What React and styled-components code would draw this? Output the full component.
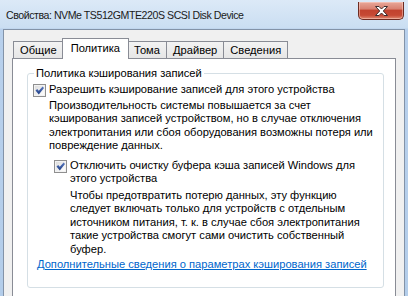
import React from "react";
import styled, { createGlobalStyle } from "styled-components";

const tabs = ["Общие", "Политика", "Тома", "Драйвер", "Сведения"];

const policyText = [
	"Производительность системы повышается за счет",
	"кэширования записей устройством, но в случае отключения",
	"электропитания или сбоя оборудования возможны потеря или",
	"повреждение данных.",
];

const flushText = [
	"Чтобы предотвратить потерю данных, эту функцию",
	"следует включать только для устройств с отдельным",
	"источником питания, т. к.  в случае сбоя электропитания",
	"такие устройства смогут сами очистить собственный",
	"буфер.",
];

function Lines({ lines }) {
	return lines.map((line, i) => (
		<React.Fragment key={i}>
			{line}
			{i < lines.length - 1 && <br />}
		</React.Fragment>
	));
}

function CheckBox({ checked }) {
	return (
		<Box>
			{checked && (
				<svg width="11" height="11" viewBox="0 0 11 11">
					<defs>
						<linearGradient id="chk" x1="0" y1="0" x2="0" y2="1">
							<stop offset="0" stopColor="#5a79c0" />
							<stop offset="1" stopColor="#1f3f86" />
						</linearGradient>
					</defs>
					<polygon
						points="1.5,5.6 3.2,4 4.8,5.8 8.6,1.4 10,2.9 4.8,9.4"
						fill="url(#chk)"
					/>
				</svg>
			)}
		</Box>
	);
}

export default function App() {
	return (
		<>
			<GlobalStyle />
			<Window>
				<TitleBar>
					<Title>Свойства: NVMe TS512GMTE220S SCSI Disk Device</Title>
					<CloseButton>
						<svg width="13" height="10" viewBox="0 0 13 10">
							<polygon
								points="0.5,0.5 4,0.5 6.5,3 9,0.5 12.5,0.5 8.3,5 12.5,9.5 9,9.5 6.5,7 4,9.5 0.5,9.5 4.7,5"
								fill="#fff"
								stroke="#3c2c2c"
								strokeWidth="1"
								strokeLinejoin="round"
							/>
						</svg>
					</CloseButton>
				</TitleBar>
				<Client>
					<TabStrip>
						{tabs.map((t, i) => (
							<Tab key={t} $active={i === 1} $first={i === 0}>
								{t}
							</Tab>
						))}
					</TabStrip>
					<TabPage>
						<GroupBox>
							<Legend>Политика кэширования записей</Legend>
							<CheckRow>
								<CheckBox checked />
								<Label>Разрешить кэширование записей для этого устройства</Label>
							</CheckRow>
							<Description $indent={16}>
								<Lines lines={policyText} />
							</Description>
							<CheckRow $indent={21} $gap={6}>
								<CheckBox checked />
								<Label>
									Отключить очистку буфера кэша записей Windows для
									<br />
									этого устройства
								</Label>
							</CheckRow>
							<Description $indent={37} $gap={3}>
								<Lines lines={flushText} />
							</Description>
							<Link href="#">Дополнительные сведения о параметрах кэширования записей</Link>
						</GroupBox>
					</TabPage>
				</Client>
			</Window>
		</>
	);
}

const GlobalStyle = createGlobalStyle`
	html, body {
		margin: 0;
		padding: 0;
		background: #c7dbf0;
	}
	body {
		width: 408px;
		height: 296px;
		overflow: hidden;
		font-family: "Liberation Sans", Arial, sans-serif;
		font-size: 11.15px;
		color: #000;
	}
`;

const Window = styled.div`
	width: 408px;
	height: 296px;
	box-sizing: border-box;
	display: flex;
	flex-direction: column;
	padding: 0 3px;
	overflow: hidden;
	background: linear-gradient(#dce9f7, #cadef2 28px, #b8d0ec 29px, #b3cdea);
`;

const TitleBar = styled.div`
	height: 29px;
	flex: none;
	display: flex;
	justify-content: space-between;
	align-items: flex-start;
`;

const Title = styled.div`
	padding: 8px 0 0 3px;
	font-size: 10.6px;
	letter-spacing: -0.45px;
	line-height: 14px;
	color: #1a1a1a;
	white-space: nowrap;
`;

const CloseButton = styled.div`
	width: 46px;
	height: 18px;
	margin: 2px 1px 0 0;
	box-sizing: border-box;
	display: flex;
	align-items: center;
	justify-content: center;
	border: 1px solid #6d2b22;
	border-top: none;
	border-radius: 0 0 5px 5px;
	background: linear-gradient(#e8a89a 0%, #d98272 40%, #c2432f 50%, #c64934 78%, #e08a72 100%);
	box-shadow: inset 0 0 0 1px rgba(255, 220, 210, 0.45);
`;

const Client = styled.div`
	flex: 1;
	display: flex;
	flex-direction: column;
	border: 1px solid #8393a8;
	border-bottom: none;
	background: #f0f0f0;
	padding: 8px 8px 0 8px;
`;

const TabStrip = styled.div`
	height: 21px;
	flex: none;
	display: flex;
	align-items: flex-end;
	padding-left: 1px;
	margin-bottom: -1px;
	position: relative;
	z-index: 1;
`;

const Tab = styled.div`
	box-sizing: border-box;
	height: ${(p) => (p.$active ? 21 : 17)}px;
	margin-bottom: ${(p) => (p.$active ? 0 : 1)}px;
	margin-left: ${(p) => (p.$first ? 0 : p.$active ? -2 : -1)}px;
	margin-right: ${(p) => (p.$active ? -1 : 0)}px;
	padding: ${(p) => (p.$active ? "2px 8px 0" : "1px 6px 0")};
	border: 1px solid #898c95;
	border-bottom: none;
	line-height: 14px;
	white-space: nowrap;
	background: ${(p) => (p.$active ? "#fff" : "linear-gradient(#f3f3f3, #e6e6e6)")};
	position: relative;
	z-index: ${(p) => (p.$active ? 2 : 1)};
`;

const TabPage = styled.div`
	flex: 1;
	border: 1px solid #898c95;
	border-bottom: none;
	background: #fff;
	padding-top: 7px;
`;

const GroupBox = styled.fieldset`
	margin: 0 11px 0 14px;
	padding: 3px 0 15px 5px;
	border: 1px solid #d5dfe5;
	border-radius: 3px;
	min-width: 0;
	line-height: 13.5px;
`;

const Legend = styled.legend`
	padding: 0 2px;
	margin-left: 1px;
	line-height: 14px;
`;

const CheckRow = styled.div`
	display: flex;
	align-items: flex-start;
	gap: 3px;
	margin-left: ${(p) => p.$indent || 0}px;
	margin-top: ${(p) => p.$gap || 0}px;
`;

const Box = styled.div`
	width: 13px;
	height: 13px;
	flex: none;
	box-sizing: border-box;
	margin-top: 1px;
	border: 1px solid #8f8f8f;
	display: flex;
	align-items: center;
	justify-content: center;
	background: linear-gradient(135deg, #d9d9d9, #f6f6f6 70%, #fff);
	box-shadow: inset 0 0 0 1px #f2f2f2;
`;

const Label = styled.div`
	white-space: nowrap;
`;

const Description = styled.div`
	margin: ${(p) => p.$gap || 1.5}px 0 0 ${(p) => p.$indent}px;
	white-space: nowrap;
`;

const Link = styled.a`
	display: inline-block;
	margin: 2px 0 0 4px;
	color: #0066cc;
	text-decoration: underline;
	white-space: nowrap;
`;
